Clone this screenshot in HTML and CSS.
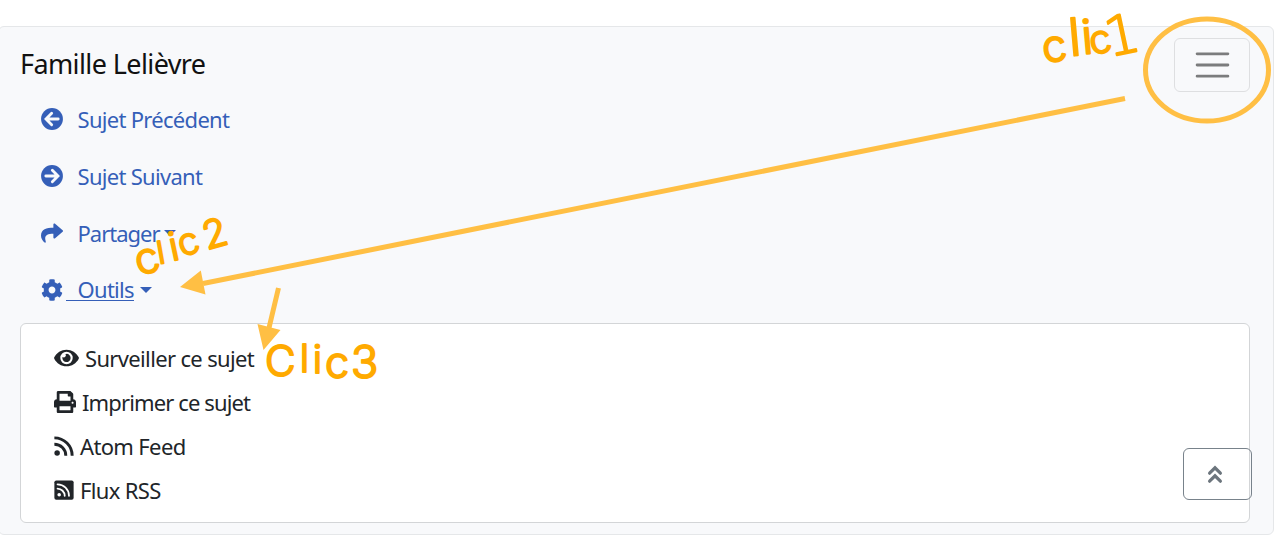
FILE: index.html
```html
<!DOCTYPE html>
<html lang="fr">
<head>
<meta charset="UTF-8" />
<meta name="viewport" content="width=device-width, initial-scale=1" />
<title>Famille Lelièvre</title>
<link rel="stylesheet" href="styles.css">
</head>
<body>
  <nav class="navbar">
    <div class="navbar-header">
      <a class="navbar-brand">Famille Lelièvre</a>
      <button class="navbar-toggler" type="button" aria-label="Menu">
        <svg viewBox="0 0 30 30"><path d="M4 7h22M4 15h22M4 23h22" /></svg>
      </button>
    </div>

    <ul class="navbar-nav">
      <li><a class="nav-link" href="#">
        <svg class="icon" viewBox="0 0 512 512"><circle cx="256" cy="256" r="254" /><path class="arrow" d="M248 125L117 256l131 131M130 256h270" /></svg>
        <span>Sujet Précédent</span>
      </a></li>
      <li><a class="nav-link" href="#">
        <svg class="icon" viewBox="0 0 512 512"><circle cx="256" cy="256" r="254" /><path class="arrow" d="M264 125l131 131-131 131M382 256H112" /></svg>
        <span>Sujet Suivant</span>
      </a></li>
      <li><a class="nav-link" href="#">
        <svg class="icon" viewBox="0 0 512 512"><path d="M503.691 189.836L327.687 37.851C312.281 24.546 288 35.347 288 56.015v80.053C127.371 137.907 0 170.1 0 322.326c0 61.441 39.581 122.309 83.333 154.132 13.653 9.931 33.111-2.533 28.077-18.631C66.066 312.814 132.917 274.316 288 272.085V360c0 20.7 24.3 31.453 39.687 18.164l176.004-152c11.071-9.562 11.086-26.753 0-36.328z" /></svg>
        <span class="tight">Partager</span>
        <i class="caret"></i>
      </a></li>
      <li><a class="nav-link active" href="#">
        <svg class="icon" viewBox="0 0 512 512"><path d="M487.4 315.7l-42.6-24.6c4.3-23.2 4.3-47 0-70.2l42.6-24.6c4.9-2.8 7.1-8.6 5.5-14-11.1-35.6-30-67.8-54.7-94.6-3.8-4.1-10-5.1-14.8-2.3L380.8 110c-17.9-15.4-38.5-27.3-60.8-35.1V25.8c0-5.6-3.9-10.5-9.4-11.7-36.7-8.2-74.3-7.8-109.2 0-5.5 1.2-9.4 6.1-9.4 11.7V75c-22.2 7.9-42.8 19.8-60.8 35.1L88.7 85.5c-4.9-2.8-11-1.9-14.8 2.3-24.7 26.7-43.6 58.9-54.7 94.6-1.7 5.4.6 11.2 5.5 14L67.3 221c-4.3 23.2-4.3 47 0 70.2l-42.6 24.6c-4.9 2.8-7.1 8.6-5.5 14 11.1 35.6 30 67.8 54.7 94.6 3.8 4.1 10 5.1 14.8 2.3l42.6-24.6c17.9 15.4 38.5 27.3 60.8 35.1v49.2c0 5.6 3.9 10.5 9.4 11.7 36.7 8.2 74.3 7.8 109.2 0 5.5-1.2 9.4-6.1 9.4-11.7v-49.2c22.2-7.9 42.8-19.8 60.8-35.1l42.6 24.6c4.9 2.8 11 1.9 14.8-2.3 24.7-26.7 43.6-58.9 54.7-94.6 1.5-5.5-.7-11.3-5.6-14.1zM256 336c-44.1 0-80-35.9-80-80s35.9-80 80-80 80 35.9 80 80-35.9 80-80 80z" /></svg>
        <span>Outils</span>
        <i class="caret"></i>
      </a></li>
    </ul>

    <div class="dropdown-menu">
      <a class="dropdown-item" href="#">
        <svg class="icon icon-eye" viewBox="0 0 576 512"><path d="M572.52 241.4C518.29 135.59 410.93 64 288 64S57.68 135.64 3.48 241.41a32.35 32.35 0 0 0 0 29.19C57.71 376.41 165.07 448 288 448s230.32-71.64 284.52-177.41a32.35 32.35 0 0 0 0-29.19zM288 400a144 144 0 1 1 144-144 143.93 143.93 0 0 1-144 144zm0-240a95.31 95.31 0 0 0-25.31 3.79 47.85 47.85 0 0 1-66.9 66.9A95.78 95.78 0 1 0 288 160z" /></svg>
        <span>Surveiller ce sujet</span>
      </a>
      <a class="dropdown-item" href="#">
        <svg class="icon" viewBox="0 0 512 512"><path d="M448 192V77.25c0-8.49-3.37-16.62-9.37-22.63L393.37 9.37c-6-6-14.14-9.37-22.63-9.37H96C78.33 0 64 14.33 64 32v160c-35.35 0-64 28.65-64 64v112c0 8.84 7.16 16 16 16h48v96c0 17.67 14.33 32 32 32h320c17.67 0 32-14.33 32-32v-96h48c8.84 0 16-7.16 16-16V256c0-35.35-28.65-64-64-64zm-64 256H128v-96h256v96zm0-224H128V64h192v48c0 8.84 7.16 16 16 16h48v96zm48 72c-13.25 0-24-10.75-24-24 0-13.26 10.75-24 24-24s24 10.74 24 24c0 13.25-10.75 24-24 24z" /></svg>
        <span class="tight">Imprimer ce sujet</span>
      </a>
      <a class="dropdown-item" href="#">
        <svg class="icon icon-rss" viewBox="0 0 448 512"><circle cx="64" cy="416" r="64" /><path class="wave" d="M0 66a414 414 0 0 1 414 414M0 214a266 266 0 0 1 266 266" /></svg>
        <span>Atom Feed</span>
      </a>
      <a class="dropdown-item" href="#">
        <svg class="icon icon-rss" viewBox="0 0 448 512"><rect y="32" width="448" height="448" rx="44" /><circle class="dot" cx="112" cy="368" r="42" /><path class="wave-sm" d="M74 124a270 270 0 0 1 266 266M74 224a170 170 0 0 1 166 166" /></svg>
        <span>Flux RSS</span>
      </a>
    </div>
  </nav>

  <button class="back-top" type="button" aria-label="Haut de page">
    <svg viewBox="0 0 16 20"><path d="M2.6 9.2L8 3.8l5.4 5.4M2.6 17.2L8 11.8l5.4 5.4" /></svg>
  </button>

  <!-- help annotations over the menu -->
  <svg class="notes" viewBox="0 0 1280 542">
    <g class="shapes">
      <ellipse cx="1207" cy="70" rx="61.5" ry="51" />
      <path d="M1125 98.5L203 283.5M278.5 288L268.5 330" />
      <path class="head" d="M180 287L200.8 270.5L205.5 294.5zM263.5 350L257.5 324L280.5 330z" />
    </g>
    <text class="ink" font-size="44"><tspan x="1044" y="63" rotate="-8">c</tspan><tspan x="1070" y="56" rotate="-5" font-size="52">l</tspan><tspan x="1083" y="54" rotate="-5" font-size="47">i</tspan><tspan x="1092" y="55" rotate="-12" font-size="39">c</tspan><tspan class="serif" x="1109" y="57" rotate="-12" font-size="54">1</tspan></text>
    <text class="ink" font-size="43"><tspan x="139" y="276" rotate="-16">c</tspan><tspan x="159" y="264" rotate="-10" font-size="31">l</tspan><tspan x="172" y="261" rotate="-12" font-size="39">i</tspan><tspan x="182" y="257" rotate="-18" font-size="37">c</tspan><tspan x="207" y="250" rotate="-16" font-size="39">2</tspan></text>
    <text class="ink" font-size="42"><tspan x="265" y="376">C</tspan><tspan x="300" y="372" font-size="38">l</tspan><tspan x="313" y="373" font-size="38">i</tspan><tspan x="325" y="378" font-size="43">c</tspan><tspan x="351" y="378" font-size="45">3</tspan></text>
  </svg>
</body>
</html>
```
FILE: styles.css
```css
body {
  font-family: "Noto Sans", "Open Sans", sans-serif;
  font-size: 22px;
  line-height: 33px;
  background: #ffffff;
  color: #212529;
  margin: 0;
  padding-top: 26px;
  overflow: hidden;
}
.navbar {
  box-sizing: border-box;
  width: 1276px;
  height: 509px;
  margin-left: -2px;
  padding: 11px 23px 0 21px;
  background: #f8f9fb;
  border: 1px solid #e5e7e9;
  border-radius: 6px;
}
.navbar-header {
  display: flex;
  justify-content: space-between;
  align-items: center;
  height: 54px;
}
.navbar-brand {
  font-size: 27px;
  letter-spacing: -0.6px;
  color: #111111;
  padding-bottom: 4px;
}
.navbar-toggler {
  box-sizing: border-box;
  width: 76px;
  height: 54px;
  padding: 0;
  background: transparent;
  border: 1px solid #dedfe1;
  border-radius: 6px;
}
.navbar-toggler svg {
  display: block;
  width: 45px;
  height: 42px;
  margin: 0 auto;
}
.navbar-toggler path {
  stroke: #7b7c7d;
  stroke-width: 2;
  stroke-linecap: round;
}
.navbar-nav {
  list-style: none;
  margin: 0;
  padding: 0 0 3px 20.5px;
}
.nav-link {
  display: flex;
  align-items: center;
  height: 57px;
  color: #355fb8;
  text-decoration: none;
}
.nav-link .icon {
  margin-top: -3px;
}
.nav-link span {
  margin: -2px 0 0 15px;
  letter-spacing: -0.7px;
}
.nav-link .tight {
  letter-spacing: -1px;
}
.nav-link.active span {
  margin: -4px 0 0 3px;
  padding-left: 12px;
  line-height: 22px;
  border-bottom: 1px solid #355fb8;
}
.icon {
  width: 22px;
  height: 22px;
  fill: currentColor;
  flex: none;
}
.arrow {
  fill: none;
  stroke: #f8f9fb;
  stroke-width: 66;
  stroke-linecap: round;
}
.caret {
  margin: -4px 0 0 6px;
  border-top: 6px solid;
  border-left: 6px solid transparent;
  border-right: 6px solid transparent;
}
.tight + .caret {
  margin-left: 4px;
}
.dropdown-menu {
  box-sizing: border-box;
  height: 200px;
  padding: 12px 33px 0;
  background: #ffffff;
  border: 1px solid #d3d5d7;
  border-radius: 6px;
}
.dropdown-item {
  display: flex;
  align-items: center;
  gap: 6px;
  height: 44px;
  color: #212529;
  text-decoration: none;
}
.icon-eye {
  width: 25px;
}
.icon-rss {
  width: 20px;
}
.wave {
  fill: none;
  stroke: currentColor;
  stroke-width: 68;
}
.dot {
  fill: #ffffff;
}
.wave-sm {
  fill: none;
  stroke: #ffffff;
  stroke-width: 42;
  stroke-linecap: round;
}
.dropdown-item span {
  letter-spacing: -0.65px;
  padding-top: 1px;
}
.dropdown-item .tight {
  letter-spacing: -0.87px;
}
.back-top {
  position: absolute;
  left: 1183px;
  top: 448px;
  box-sizing: border-box;
  width: 69px;
  height: 52px;
  padding: 0 5px 0 0;
  background: transparent;
  border: 1px solid #78828b;
  border-radius: 6px;
}
.back-top svg {
  display: block;
  width: 16px;
  height: 20px;
  margin: 0 auto;
}
.back-top path {
  fill: none;
  stroke: #6c757d;
  stroke-width: 3.2;
  stroke-linecap: round;
}
.notes {
  position: absolute;
  left: 0;
  top: 0;
  width: 1280px;
  height: 542px;
  pointer-events: none;
}
.shapes {
  fill: none;
  stroke: #ffbf44;
  stroke-width: 5;
}
.shapes .head {
  fill: #ffbf44;
  stroke: none;
}
.ink {
  font-family: Inter, "Noto Sans", sans-serif;
  font-weight: 300;
  fill: #ffaa00;
  stroke: #ffaa00;
  stroke-width: 2;
  stroke-linejoin: round;
}
.ink .serif {
  font-family: "DejaVu Sans", sans-serif;
  stroke-width: 2;
}
```
